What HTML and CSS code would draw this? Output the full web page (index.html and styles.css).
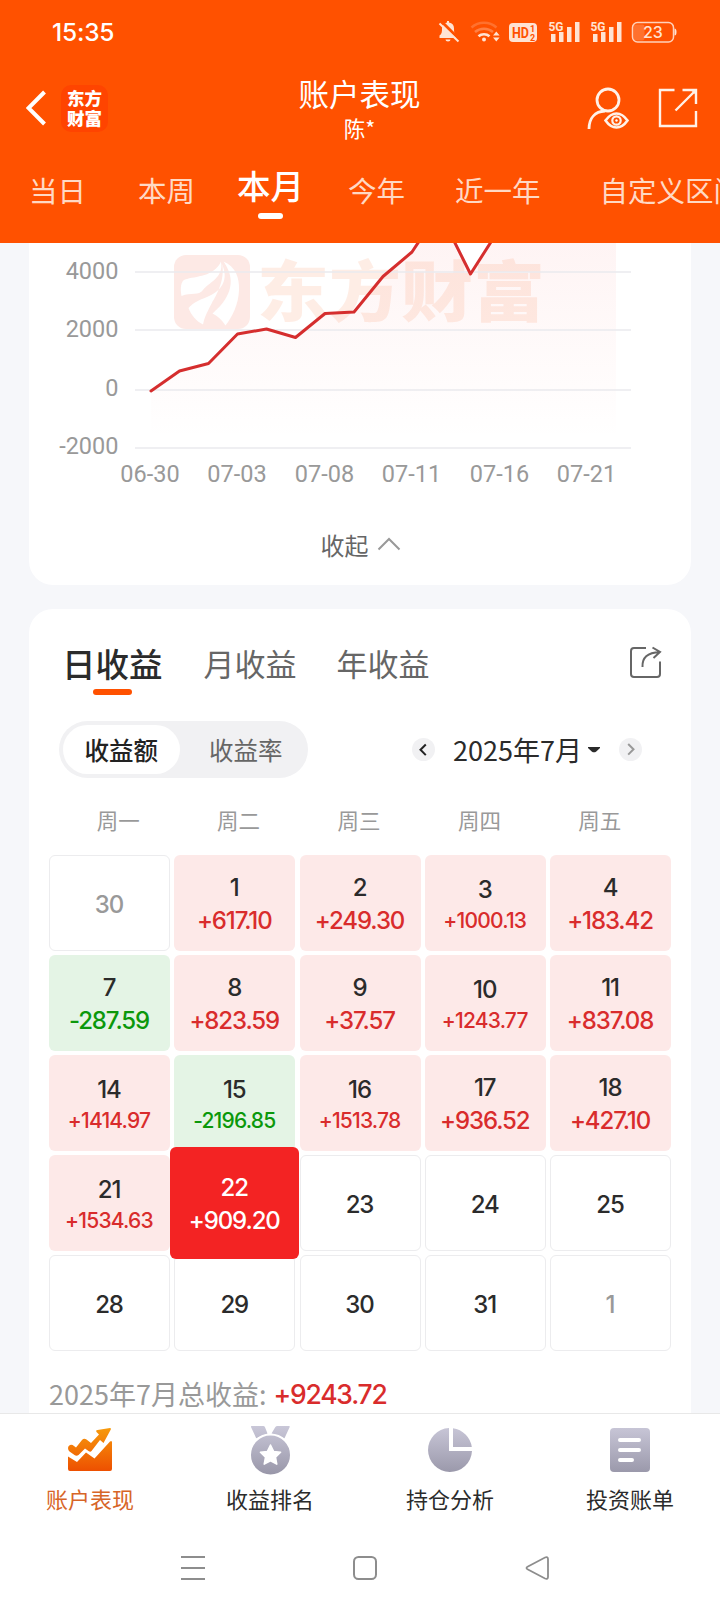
FILE: index.html
```html
<!DOCTYPE html>
<html lang="zh-CN">
<head>
<meta charset="utf-8">
<title>账户表现</title>
<link rel="stylesheet" href="styles.css">
</head>
<body>
<div class="screen">
  <header class="header">
    <div class="status">
      <span class="clock">15:35</span>
      <svg class="status-icons" width="250" height="26" viewBox="0 0 250 26" fill="#ffe3d3">
        <path d="M4.500 20v-2.500c2.500-1.500 2.500-4 2.500-7 0-3.500 2-5.500 5-6V3h2v1.500c3.500.5 5 2.500 5 6 0 3 0 5.500 2.500 7V20z"/>
        <path d="M10.500 21.500h5a2.500 2 0 0 1-5 0z"/>
        <path d="M6 3 25 22" stroke="#ff5100" stroke-width="3"/>
        <path d="M4.500 5.500 23.500 23.500" stroke="#ffe3d3" stroke-width="2"/>
        <g fill="none" stroke="#ffe3d3" stroke-width="2.600">
          <path d="M36.500 9.500a19 19 0 0 1 25 0" opacity=".22"/>
          <path d="M40 14a14 14 0 0 1 18 0" opacity=".32"/>
          <path d="M43.500 18.300a8.500 8.500 0 0 1 11 0"/>
        </g>
        <circle cx="49" cy="21.500" r="2"/>
        <path d="m58 17.500 3.300-4 3.300 4zM58 19.500h6.600l-3.300 4z"/>
        <rect x="74" y="5" width="28" height="19" rx="4"/>
        <text class="hd" x="77" y="20" fill="#ff5100" textLength="17" lengthAdjust="spacingAndGlyphs">HD</text>
        <text class="hd-sub" x="95" y="14" fill="#ff5100">1</text>
        <text class="hd-sub" x="95" y="22.500" fill="#ff5100">2</text>
        <g id="signal">
          <text class="five-g" x="113.500" y="12.500" textLength="15" lengthAdjust="spacingAndGlyphs">5G</text>
          <rect x="116" y="16" width="4.500" height="8"/><rect x="124" y="14" width="4.500" height="10"/>
          <rect x="132" y="9" width="4.500" height="15"/><rect x="140" y="4" width="4.500" height="20"/>
        </g>
        <use href="#signal" x="42"/>
        <rect x="198.500" y="6.500" width="11" height="16" rx="2" opacity=".22"/>
        <rect x="197.500" y="4.500" width="41" height="19.500" rx="5" fill="none" stroke="#ffd2bb" stroke-width="1.500"/>
        <path d="M239.500 10.500q2 0 2 3.500t-2 3.500z"/>
        <text class="battery" x="208" y="20">23</text>
      </svg>
    </div>
    <div class="titlebar">
      <div class="left">
        <svg width="20" height="36" viewBox="0 0 20 36"><path d="M18.500 2 2.500 18 18.500 34" fill="none" stroke="#fff" stroke-width="4"/></svg>
        <div class="logo"><span>东方</span><span>财富</span></div>
      </div>
      <div class="titles"><h1>账户表现</h1><p>陈*</p></div>
      <div class="actions">
        <svg width="44" height="44" viewBox="0 0 44 44" fill="none" stroke="#fff1e8" stroke-width="2.800">
          <circle cx="22" cy="14" r="11"/>
          <path d="M3 43C3 32 9 25.500 19 25"/>
          <path d="M19.500 34.500q5-7 11-7t11 7q-5 7-11 7t-11-7z" stroke-width="2.600"/>
          <circle cx="30.500" cy="34.500" r="4.200" stroke-width="2.200"/><circle cx="30.500" cy="34.500" r="1.200" fill="#fff" stroke="none"/>
        </svg>
        <svg width="40" height="40" viewBox="0 0 40 40" fill="none" stroke="#fff1e8" stroke-width="2.400">
          <path d="M16.500 2H2v36h36V23M24.500 2H38v14M38 2 17.500 22.500"/>
          <path d="m32 1.200 6.800 0v6.800z" fill="#fff1e8" stroke="none"/>
        </svg>
      </div>
    </div>
    <nav class="periods">
      <span>当日</span><span>本周</span><span class="active">本月</span><span>今年</span><span class="wide">近一年</span><span class="custom">自定义区间</span>
    </nav>
  </header>

  <main class="content">
    <section class="card chart-card">
      <svg class="chart" width="662" height="256" viewBox="29 243 662 256">
        <defs>
          <linearGradient id="area" x1="0" y1="200" x2="0" y2="440" gradientUnits="userSpaceOnUse">
            <stop offset="0" stop-color="#f5403f" stop-opacity=".07"/>
            <stop offset="1" stop-color="#f5403f" stop-opacity="0"/>
          </linearGradient>
        </defs>
        <g>
          <rect x="174" y="255" width="76" height="74" rx="12" fill="#fde9e5"/>
          <path d="M181.500 296C180 288 181 281 185 279.500 196 276 214 277 221 261.500 224 278 209 282 203 290 199 296 191 292 181.500 296z" fill="#fff"/>
          <path d="M222 262C229 280 222 291 207 297 199 300 193 303 188.500 308 191 315 196 321 203 324.500 207 304 227 289 222 262z" fill="#fff"/>
          <path d="M223.500 261.500C236 267 239.500 278 239 290 238.500 305 232 317 225.500 325.500 222 320 218 316 212.500 313.500 227 301 239 283 223.500 261.500z" fill="#fff"/>
          <path d="M222 261C231 279 226 293 213 303" fill="none" stroke="#fde9e5" stroke-width="2.500"/>
        </g>
        <text class="watermark" x="257" y="316" textLength="288" lengthAdjust="spacingAndGlyphs">东方财富</text>
        <path d="M151 391 179.500 371 208.500 363.500 237.500 334 266.500 329 295.500 337.500 325 313.500 354 312 383 276.500 412 252 441.500 211 470.500 274 500 231 616 200V440H151z" fill="url(#area)"/>
        <path d="M135 272H631M135 330H631M135 390H631M135 448H631" stroke="#e9e9ed" stroke-opacity=".75" stroke-width="2"/>
        <path d="M151 391 179.500 371 208.500 363.500 237.500 334 266.500 329 295.500 337.500 325 313.500 354 312 383 276.500 412 252 439 211 470.500 274 498 231" fill="none" stroke="#d52e2e" stroke-width="3" stroke-linejoin="round" stroke-linecap="round"/>
        <g class="axis" text-anchor="end">
          <text x="118.500" y="279">4000</text><text x="118.500" y="337">2000</text><text x="118.500" y="396">0</text><text x="118.500" y="454">-2000</text>
        </g>
        <g class="axis" text-anchor="middle">
          <text x="150" y="482">06-30</text><text x="237" y="482">07-03</text><text x="324.500" y="482">07-08</text><text x="411.500" y="482">07-11</text><text x="499.500" y="482">07-16</text><text x="586.500" y="482">07-21</text>
        </g>
      </svg>
      <div class="collapse"><span>收起</span>
        <svg width="24" height="14" viewBox="0 0 24 14"><path d="M1.500 12.500 12 2l10.500 10.500" fill="none" stroke="#999" stroke-width="2"/></svg>
      </div>
    </section>

    <section class="card calendar-card">
      <div class="tabs">
        <span class="active">日收益</span><span>月收益</span><span>年收益</span>
        <svg width="34" height="34" viewBox="0 0 34 34" fill="none" stroke="#666" stroke-width="2">
          <path d="M18 3H6Q3 3 3 6v23q0 3 3 3h23q3 0 3-3V16.500" />
          <path d="M14.500 22C14 13 19 7.500 32 7M24.500 2.500l7.500 4.500-6.500 6"/>
        </svg>
      </div>
      <div class="controls">
        <div class="toggle"><span class="on">收益额</span><span>收益率</span></div>
        <div class="month">
          <svg width="23" height="23" viewBox="0 0 23 23"><circle cx="11.500" cy="11.500" r="11.500" fill="#f1f1f3"/><path d="m13.800 6.500-5.300 5.300 5.300 5.300" fill="none" stroke="#222" stroke-width="2"/></svg>
          <span class="month-name">2025年7月</span>
          <svg class="caret" width="12" height="6" viewBox="0 0 12 6"><path d="M0 0h12v1L8 4.800q-2 1-4 0L0 1z" fill="#2b2b2b"/></svg>
          <svg width="23" height="23" viewBox="0 0 23 23"><circle cx="11.500" cy="11.500" r="11.500" fill="#f1f1f3"/><path d="m9.200 6 5.300 5.300-5.300 5.300" fill="none" stroke="#999" stroke-width="2"/></svg>
        </div>
      </div>
      <div class="weekdays"><span>周一</span><span>周二</span><span>周三</span><span>周四</span><span>周五</span></div>
      <div class="grid">
        <div class="day muted"><b>30</b></div>
        <div class="day up"><b>1</b><i>+617.10</i></div>
        <div class="day up"><b>2</b><i>+249.30</i></div>
        <div class="day up long"><b>3</b><i>+1000.13</i></div>
        <div class="day up"><b>4</b><i>+183.42</i></div>
        <div class="day down"><b>7</b><i>-287.59</i></div>
        <div class="day up"><b>8</b><i>+823.59</i></div>
        <div class="day up"><b>9</b><i>+37.57</i></div>
        <div class="day up long"><b>10</b><i>+1243.77</i></div>
        <div class="day up"><b>11</b><i>+837.08</i></div>
        <div class="day up long"><b>14</b><i>+1414.97</i></div>
        <div class="day down long"><b>15</b><i>-2196.85</i></div>
        <div class="day up long"><b>16</b><i>+1513.78</i></div>
        <div class="day up"><b>17</b><i>+936.52</i></div>
        <div class="day up"><b>18</b><i>+427.10</i></div>
        <div class="day up long"><b>21</b><i>+1534.63</i></div>
        <div class="day selected"><b>22</b><i>+909.20</i></div>
        <div class="day"><b>23</b></div>
        <div class="day"><b>24</b></div>
        <div class="day"><b>25</b></div>
        <div class="day"><b>28</b></div>
        <div class="day"><b>29</b></div>
        <div class="day"><b>30</b></div>
        <div class="day"><b>31</b></div>
        <div class="day muted"><b>1</b></div>
      </div>
      <div class="total"><span>2025年7月总收益:</span><strong>+9243.72</strong></div>
    </section>
  </main>

  <nav class="bottom">
    <div class="item current">
      <svg width="50" height="50" viewBox="0 0 50 50">
        <defs>
          <linearGradient id="orange" x1="0" y1="3" x2="0" y2="47" gradientUnits="userSpaceOnUse"><stop offset="0" stop-color="#f79a0c"/><stop offset="1" stop-color="#ed4e00"/></linearGradient>
          <linearGradient id="gray" x1="0" y1="1" x2="0" y2="49" gradientUnits="userSpaceOnUse"><stop offset="0" stop-color="#c9c7d8"/><stop offset="1" stop-color="#9997a9"/></linearGradient>
        </defs>
        <path d="M3 31.500 12 37 21 27.500 29.500 33.500 45 16.500Q47 15 47 17.500V44q0 2-2 2H5q-2 0-2-2z" fill="url(#orange)"/>
        <path d="M3 23q0-2 2-3 2-1 4 1l2 1.500 6-7.500q2-2 4.500-.5l4.500 3.500L34 9.500 31.500 7q-1-1.800 1-2L45 3q1.500 0 .8 1.500L38.500 18l-3.500-3-8.500 11q-1 1.500-3 0L20 23.500l-6.500 6.500q-2 1.500-4 0l-5-3.500Q3 25 3 23z" fill="url(#orange)"/>
      </svg>
      <span>账户表现</span>
    </div>
    <div class="item">
      <svg width="50" height="50" viewBox="0 0 50 50"><g fill="url(#gray)"><path d="M6.500 1h11.800q1.200 0 1.700 1.200l2.500 6.300-11.300 4.800L6 2q-.3-1 .5-1zM32.500 1h11.500q1 0 .7 1L39.500 13.300 26.500 8.500l3.700-6.300Q31 1 32.500 1z"/><circle cx="25.500" cy="30" r="20.500" stroke="#fff" stroke-width="2"/></g><path d="m25.500 20 3.100 6.400 7 .9-5.100 4.900 1.300 7-6.300-3.400-6.300 3.400 1.300-7-5.100-4.900 7-.9z" fill="#fff" stroke="#fff" stroke-width="1.500" stroke-linejoin="round"/></svg>
      <span>收益排名</span>
    </div>
    <div class="item">
      <svg width="50" height="50" viewBox="0 0 50 50" fill="url(#gray)"><path d="M24 3v23h23A22 22 0 1 1 24 3zM28 3.200A22 22 0 0 1 46.800 22H28z"/></svg>
      <span>持仓分析</span>
    </div>
    <div class="item">
      <svg width="50" height="50" viewBox="0 0 50 50"><rect x="5" y="3" width="40" height="44" rx="4" fill="url(#gray)"/><path d="M15 15h19M15 25h19M15 35h12" stroke="#fff" stroke-width="4" stroke-linecap="round"/></svg>
      <span>投资账单</span>
    </div>
  </nav>
  <div class="system">
    <svg width="26" height="26" viewBox="0 0 26 26"><path d="M1 2h24M1 13h24M1 24h24" stroke="#8d8d8d" stroke-width="2"/></svg>
    <svg width="26" height="26" viewBox="0 0 26 26"><rect x="2" y="2" width="22" height="22" rx="4.500" fill="none" stroke="#8d8d8d" stroke-width="2"/></svg>
    <svg width="26" height="26" viewBox="0 0 26 26"><path d="M3.500 11.700 21 2.500q3-1 3 1.500v18q0 2.500-3 1.500L3.500 14.300q-2-1.300 0-2.600z" fill="none" stroke="#8d8d8d" stroke-width="1.800"/></svg>
  </div>
</div>
</body>
</html>
```

FILE: styles.css
```css
* { box-sizing: border-box; }
body {
  margin: 0;
  background: #fff;
  font-family: "Noto Sans CJK SC", sans-serif;
  color: #2b2b2b;
}
svg { display: block; flex: none; }
.screen {
  display: flex;
  flex-direction: column;
  width: 720px;
  height: 1612px;
  overflow: hidden;
}

/* Header */
.header { height: 243px; flex: none; background: #ff5100; color: #fff; overflow: hidden; }
.status {
  display: flex;
  justify-content: space-between;
  height: 64px;
  padding: 18px 35px 0 52px;
}
.clock { font: 500 24.500px/29px Inter, sans-serif; letter-spacing: -0.2px; }
.hd { font: 700 14px Roboto, sans-serif; }
.hd-sub { font: 700 9px Roboto, sans-serif; }
.five-g { font: 700 12px Roboto, sans-serif; }
.battery { font: 500 16px Inter, sans-serif; }
.titlebar {
  display: grid;
  grid-template-columns: 1fr auto 1fr;
  height: 90px;
  padding: 0 22px 0 26px;
}
.left { display: flex; align-items: center; gap: 15px; height: 88px; }
.logo {
  display: flex;
  flex-direction: column;
  width: 47px;
  height: 47px;
  padding: 3px 0 0 6px;
  border-radius: 10px;
  background: #ff4400;
  font-size: 17.5px;
  font-weight: 900;
  line-height: 20px;
}
.titles { text-align: center; margin-left: -5px; }
.titles h1 { margin: 8px 0 0; font-size: 30.5px; font-weight: 400; line-height: 42px; }
.titles p { margin: 0; font-size: 21.5px; line-height: 28px; }
.actions { display: flex; justify-content: flex-end; align-items: center; gap: 27px; height: 88px; }
.actions svg:first-child { margin-right: 1px; }
.periods { display: flex; padding: 12px 0 0 29px; white-space: nowrap; }
.periods span { margin-right: 52px; font-size: 28.5px; line-height: 48px; color: #ffd9c4; }
.periods .active {
  display: flex;
  flex-direction: column;
  align-items: center;
  margin: -5px 44px 0 -10px;
  font-size: 33.500px;
  font-weight: 500;
  color: #fff;
}
.periods .active::after { content: ""; width: 25px; height: 6px; margin-top: 4px; border-radius: 3px; background: #fff; }
.periods .wide { margin-left: -2px; }
.periods .custom { margin: 0 0 0 7px; }

/* Cards */
.content { height: 1170px; flex: none; padding: 0 29px; background: #f6f7fa; overflow: hidden; }
.card { background: #fff; }
.chart-card { height: 342px; border-radius: 0 0 24px 24px; }
.axis { font: 400 23.500px Roboto, sans-serif; fill: #999; }
.watermark { font: 900 66px "Noto Sans CJK SC", sans-serif; fill: #fbcdb6; fill-opacity: .36; }
.collapse {
  display: flex;
  justify-content: center;
  align-items: center;
  gap: 8px;
  height: 90px;
  padding-left: 1px;
  font-size: 24px;
  color: #666;
}
.collapse svg { margin-top: -1px; }
.calendar-card { height: 900px; margin-top: 24px; border-radius: 24px 24px 0 0; }
.tabs { display: flex; padding: 29px 29px 0 33px; height: 112px; }
.tabs span { flex: none; margin-right: 40px; font-size: 31px; line-height: 50px; color: #666; white-space: nowrap; }
.tabs .active {
  display: flex;
  flex-direction: column;
  align-items: center;
  margin-right: 41px;
  font-size: 33.500px;
  font-weight: 500;
  color: #2b2b2b;
}
.tabs .active::after { content: ""; width: 39px; height: 6px; margin-top: 1px; border-radius: 3px; background: #ff5100; }
.tabs svg { margin: 7px 0 0 auto; }
.controls { display: flex; justify-content: space-between; align-items: center; height: 57px; padding: 0 49px 0 30px; }
.toggle { display: flex; width: 249px; height: 57px; padding: 4px; border-radius: 29px; background: #f1f1f3; }
.toggle span { width: 117px; font-size: 24.500px; line-height: 49px; text-align: center; color: #666; }
.toggle .on { border-radius: 25px; background: #fff; font-weight: 500; color: #222; }
.toggle span:last-child { margin-left: 8px; }
.month { display: flex; align-items: center; }
.month-name { margin: 0 6px 0 18px; font-size: 27px; line-height: 40px; white-space: nowrap; }
.caret { margin-right: 19px; }
.weekdays { display: grid; grid-template-columns: repeat(5, 1fr); padding: 25px 31px 0 29px; height: 77px; }
.weekdays span { font-size: 21.500px; line-height: 34px; text-align: center; color: #999; }
.grid {
  display: grid;
  grid-template-columns: repeat(5, 121px);
  grid-auto-rows: 96px;
  row-gap: 4px;
  justify-content: space-between;
  margin: 0 20px;
}
.day {
  display: flex;
  flex-direction: column;
  align-items: center;
  justify-content: center;
  padding-top: 4px;
  border: 1px solid #ececee;
  border-radius: 6px;
  font-family: Inter, sans-serif;
}
.day b, .day i { font: 450 24px/32px Inter, sans-serif; letter-spacing: -1.1px; }
.day b { margin-left: -1px; }
.day i { font-weight: 500; margin: 1px 0 0 -1px; }
.day.up, .day.down { justify-content: flex-start; padding-top: 17px; border: 0; }
.up { background: #fde9e8; }
.up i { color: #d92c2c; }
.down { background: #e4f4e5; }
.down i { color: #0b980b; }
.day.long { padding-top: 19px; }
.day.long i { margin-top: -1px; font-size: 21px; font-weight: 450; letter-spacing: -0.8px; }
.muted b { color: #999; }
.day.selected {
  position: relative;
  z-index: 1;
  justify-content: flex-start;
  margin: -8px -4px;
  padding-top: 25px;
  border: 0;
  background: #f32323;
  color: #fff;
}
.total { display: flex; gap: 7px; padding: 22px 20px 0; font-size: 27px; line-height: 42px; color: #999; white-space: nowrap; }
.total strong { font: 500 26.500px/42px Inter, sans-serif; letter-spacing: -1.200px; color: #d92c2c; }

/* Bottom navigation */
.bottom { display: grid; grid-template-columns: repeat(4, 1fr); height: 112px; flex: none; border-top: 1px solid #e8e8e8; }
.item { display: flex; flex-direction: column; align-items: center; padding-top: 11px; }
.item span { margin-top: 6px; font-size: 22px; line-height: 34px; }
.current span { color: #d76527; }
.system { display: flex; justify-content: space-between; padding: 30px 170px 0 180px; }
```
